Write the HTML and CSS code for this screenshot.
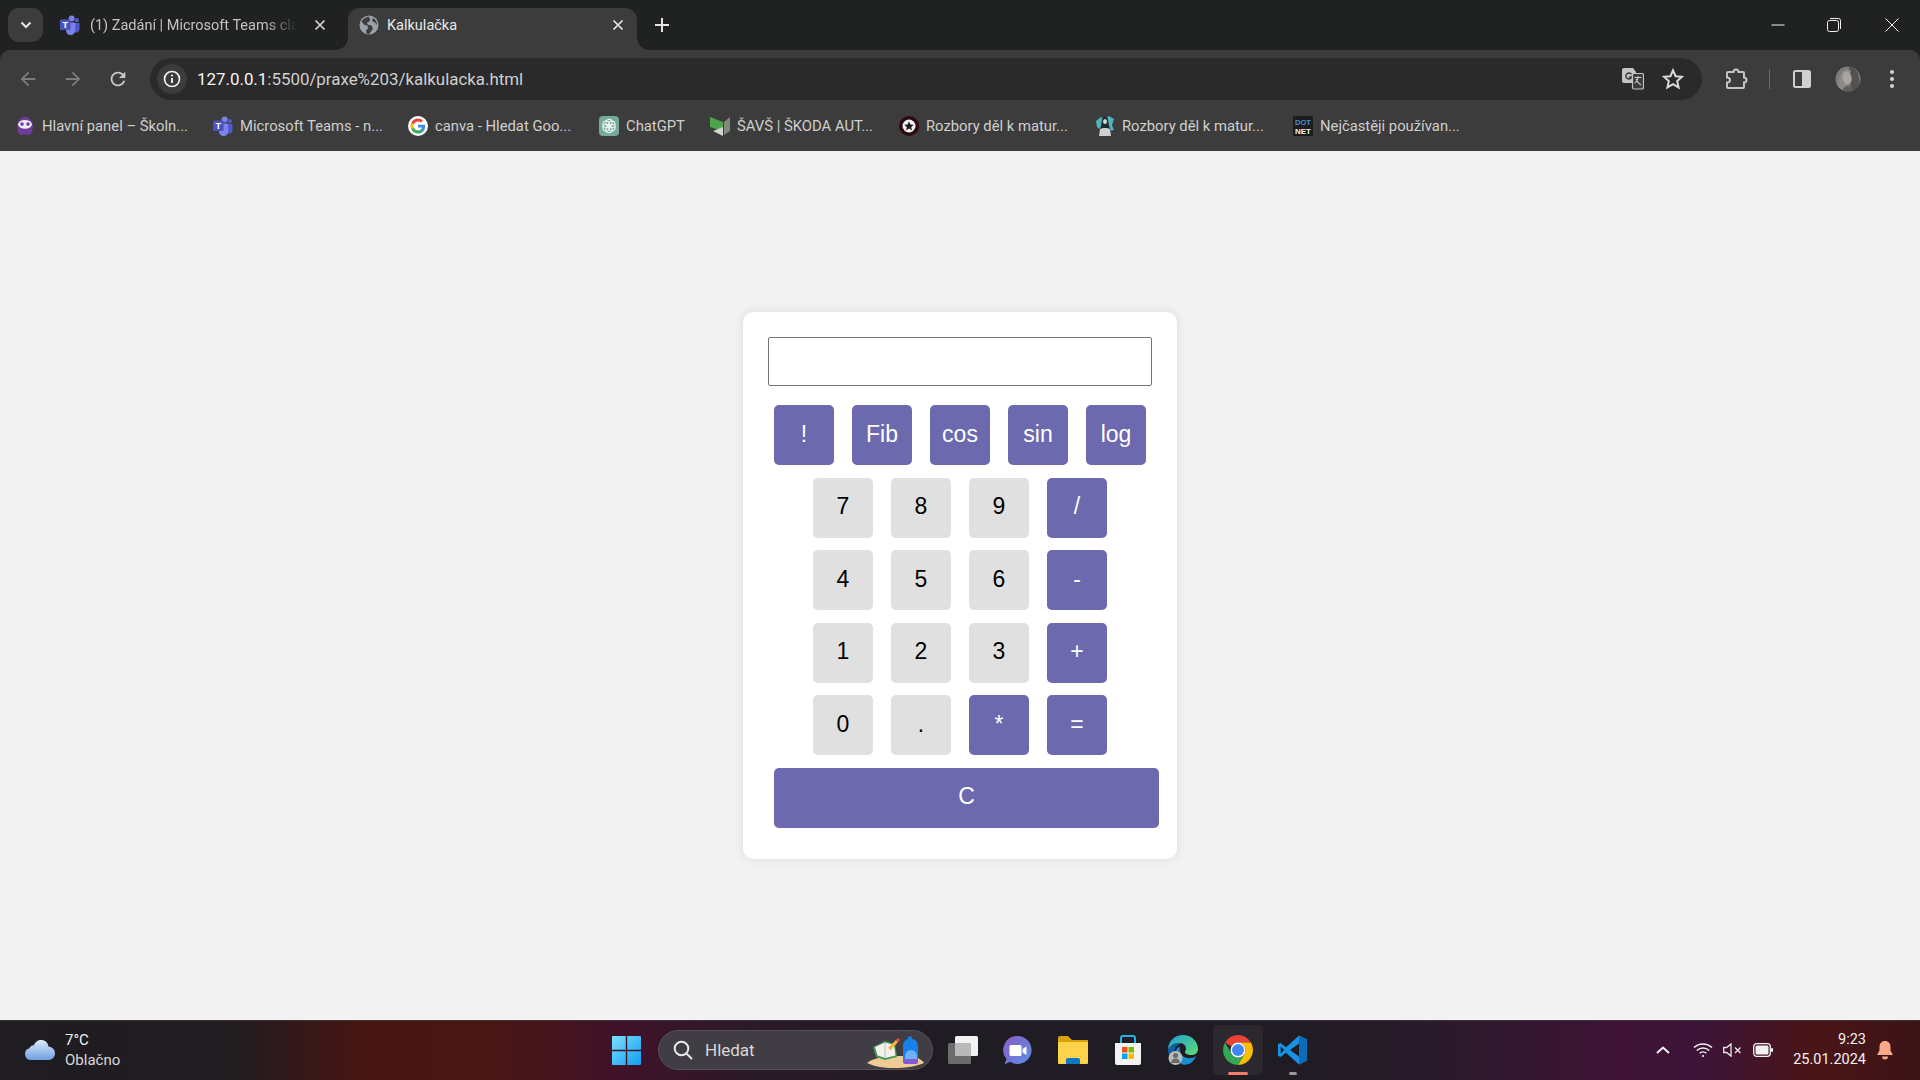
FILE: index.html
```html
<!DOCTYPE html>
<html lang="cs">
<head>
<meta charset="utf-8">
<title>Kalkulačka</title>
<link rel="stylesheet" href="styles.css">
</head>
<body>
<svg class="defs" width="0" height="0" aria-hidden="true">
  <symbol id="teams" viewBox="0 0 20 20">
    <circle cx="11.6" cy="3.6" r="3" fill="#7b83eb"/>
    <circle cx="16.8" cy="5.2" r="2.1" fill="#5059c9"/>
    <path d="M13.5 8h6v6.2a3.2 3.2 0 0 1-4.5 3z" fill="#5059c9"/>
    <path d="M6 7.5h9.2v8a4.6 4.6 0 0 1-9.2 0z" fill="#7b83eb"/>
    <rect x="0" y="4.6" width="10.5" height="10.5" rx="1.2" fill="#4b53bc"/>
    <text x="5.25" y="12.9" class="svg-t">T</text>
  </symbol>
  <symbol id="back" viewBox="0 0 24 24"><path d="M20 11H7.83l5.59-5.59L12 4l-8 8 8 8 1.41-1.41L7.83 13H20v-2z"/></symbol>
  <symbol id="forward" viewBox="0 0 24 24"><path d="M12 4l-1.41 1.41L16.17 11H4v2h12.17l-5.58 5.59L12 20l8-8z"/></symbol>
</svg>

<header class="chrome">
  <div class="tabstrip">
    <button class="tab-list" type="button">
      <svg width="12" height="8" viewBox="0 0 12 8"><path d="M1.5 1.5 6 6l4.5-4.5" fill="none" stroke="#e6e6e6" stroke-width="2"/></svg>
    </button>
    <div class="tab tab-bg">
      <svg class="fav" width="20" height="20"><use href="#teams"/></svg>
      <span class="tab-title tab-title-fade">(1) Zadání | Microsoft Teams cla</span>
      <svg class="tab-close" width="12" height="12" viewBox="0 0 12 12"><path d="M1.5 1.5l9 9m0-9l-9 9" stroke="#d6d6d6" stroke-width="1.7"/></svg>
    </div>
    <div class="tab tab-active">
      <svg class="fav" width="20" height="20" viewBox="0 0 20 20">
        <circle cx="10" cy="10" r="9.5" fill="#9aa0a6"/>
        <path d="M9.5 1.5C6 2.5 3.5 4.5 2.5 6.5l3 3.5 3 .5.5 3-2 2 .5 3c1 .3 2 .5 3 .3l3.500-5.300-1.500-3-4-1-.5-2 2.500-1 .5-2.500z M14 3l-1 3 3 1.500 2 2.500c0-3-1.500-5.500-4-7z" fill="#3c3c3c"/>
      </svg>
      <span class="tab-title tab-title-on">Kalkulačka</span>
      <svg class="tab-close" width="12" height="12" viewBox="0 0 12 12"><path d="M1.5 1.5l9 9m0-9l-9 9" stroke="#e6e6e6" stroke-width="1.700"/></svg>
    </div>
    <svg class="newtab" width="14" height="14" viewBox="0 0 14 14"><path d="M7 0v14M0 7h14" stroke="#e6e6e6" stroke-width="2"/></svg>
    <div class="winctl">
      <svg width="14" height="14" viewBox="0 0 14 14"><path d="M0.500 7h13" stroke="#f0f0f0" stroke-width="1"/></svg>
      <svg width="14" height="14" viewBox="0 0 14 14" fill="none" stroke="#f0f0f0"><rect x=".5" y="2.500" width="11" height="11" rx="2"/><path d="M3 .5h8.500a2 2 0 0 1 2 2V11"/></svg>
      <svg width="14" height="14" viewBox="0 0 14 14"><path d="M.5.500l13 13m0-13l-13 13" stroke="#f0f0f0" stroke-width="1"/></svg>
    </div>
  </div>

  <div class="toolbar">
    <div class="navrow">
      <div class="nav-btn"><svg class="ic-dim" width="22" height="22"><use href="#back"/></svg></div>
      <div class="nav-btn"><svg class="ic-dim" width="22" height="22"><use href="#forward"/></svg></div>
      <div class="nav-btn"><svg class="ic-light" width="22" height="22" viewBox="0 0 24 24"><path d="M17.650 6.350C16.200 4.900 14.210 4 12 4c-4.420 0-7.990 3.580-7.990 8s3.570 8 7.990 8c3.730 0 6.840-2.550 7.730-6h-2.080c-.82 2.330-3.040 4-5.650 4-3.310 0-6-2.690-6-6s2.690-6 6-6c1.660 0 3.140.69 4.220 1.780L13 11h7V4l-2.350 2.350z"/></svg></div>

      <div class="omnibox">
        <div class="site-info">
          <svg width="18" height="18" viewBox="0 0 18 18"><circle cx="9" cy="9" r="7.500" fill="none" stroke="#eee" stroke-width="1.700"/><path d="M9 8v5" stroke="#eee" stroke-width="1.900"/><circle cx="9" cy="5.500" r="1.100" fill="#eee"/></svg>
        </div>
        <span class="url"><span class="url-host">127.0.0.1</span>:5500/praxe%203/kalkulacka.html</span>
        <div class="omni-actions">
          <svg width="22" height="22" viewBox="0 0 22 22">
            <path d="M2 0h9l3 4v11H2a2 2 0 0 1-2-2V2a2 2 0 0 1 2-2z" fill="#c4c4c4"/>
            <path d="M9.500 6.500a3 3 0 1 0 .2 2.500H7" fill="none" stroke="#3c3c3c" stroke-width="1.500"/>
            <rect x="10.500" y="5.500" width="11" height="15.500" rx="1.500" fill="#3c3c3c" stroke="#c4c4c4" stroke-width="1.200"/>
            <path d="M12.500 9.500h7M16 8v1.500c-.3 3-1.500 4.500-3.500 5.500M14 11c1 2.500 2.500 4.500 5 6" fill="none" stroke="#c4c4c4" stroke-width="1.100"/>
          </svg>
          <svg width="22" height="22" viewBox="0 0 22 22"><path d="M11 2.300l2.600 5.900 6.400.6-4.800 4.300 1.400 6.300L11 16.100l-5.600 3.300 1.400-6.300L2 8.800l6.400-.6z" fill="none" stroke="#dcdcdc" stroke-width="2" stroke-linejoin="miter"/></svg>
        </div>
      </div>

      <div class="tool-right">
        <div class="tool-cell"><svg width="22" height="22" viewBox="0 0 22 22"><path d="M2 4H7.500a2.500 2.500 0 0 1 5 0H17a1 1 0 0 1 1 1v4.500a2.500 2.500 0 0 1 0 5V19a1 1 0 0 1-1 1H2a1 1 0 0 1-1-1v-4.500c2.500 0 3-1.500 3-2.500s-.5-2.500-3-2.500V5a1 1 0 0 1 1-1z" fill="none" stroke="#c4c4c4" stroke-width="2"/></svg></div>
        <div class="tool-cell"><span class="tool-sep"></span></div>
        <div class="tool-cell"><svg width="18" height="18" viewBox="0 0 18 18"><rect x="1" y="1" width="16" height="16" rx="1.500" fill="none" stroke="#d0d0d0" stroke-width="2"/><rect x="9" y="1" width="8" height="16" fill="#d0d0d0"/></svg></div>
        <div class="tool-cell">
          <svg width="26" height="26" viewBox="0 0 26 26">
            <defs><clipPath id="av"><circle cx="13" cy="13" r="12.500"/></clipPath></defs>
            <g clip-path="url(#av)">
              <rect width="26" height="26" fill="#7e7c7a"/>
              <path d="M14 0c6 1 10 6 10 13l2 13H16z" fill="#55514f"/>
              <path d="M3 26c0-9 1-17 5-21 3-2 6-2 8 0l-6 21z" fill="#8c8a88"/>
              <ellipse cx="12" cy="12" rx="4.500" ry="6.500" transform="rotate(-12 12 12)" fill="#a8a6a4"/>
              <path d="M7 26c1-4 3-6 6-6s5 2 6 6z" fill="#5f5c5a"/>
            </g>
          </svg>
        </div>
        <div class="tool-cell"><svg width="6" height="20" viewBox="0 0 6 20"><circle cx="3" cy="3" r="2.100" fill="#d0d0d0"/><circle cx="3" cy="10" r="2.100" fill="#d0d0d0"/><circle cx="3" cy="17" r="2.100" fill="#d0d0d0"/></svg></div>
      </div>
    </div>

    <nav class="bookmarks">
      <a class="bm">
        <svg width="20" height="20" viewBox="2.500 1 15 18">
          <path d="M3 9a7 7 0 0 1 14 0c0 4-.5 7-2 8.500-1 1-2 .5-3 0H8c-1 .5-2 1-3 0C3.500 16 3 13 3 9z" fill="#6f3c9e"/>
          <ellipse cx="10" cy="8.500" rx="6.200" ry="4" fill="#f0ecf4"/>
          <circle cx="7.300" cy="8.300" r="1.600" fill="#6f3c9e"/><circle cx="12.700" cy="8.300" r="1.600" fill="#6f3c9e"/>
        </svg>
        <span>Hlavní panel – Školn...</span>
      </a>
      <a class="bm"><svg width="20" height="20"><use href="#teams"/></svg><span>Microsoft Teams - n...</span></a>
      <a class="bm">
        <svg width="20" height="20" viewBox="-8 -8 64 64">
          <circle cx="24" cy="24" r="32" fill="#fff"/>
          <path fill="#EA4335" d="M24 9.500c3.540 0 6.710 1.220 9.210 3.600l6.850-6.850C35.900 2.380 30.470 0 24 0 14.620 0 6.510 5.380 2.560 13.220l7.980 6.190C12.430 13.720 17.740 9.500 24 9.500z"/>
          <path fill="#4285F4" d="M46.980 24.550c0-1.570-.15-3.090-.38-4.550H24v9.020h12.940c-.58 2.960-2.260 5.480-4.780 7.180l7.730 6c4.510-4.180 7.090-10.360 7.090-17.650z"/>
          <path fill="#FBBC05" d="M10.530 28.590c-.48-1.450-.76-2.990-.76-4.590s.27-3.140.76-4.590l-7.980-6.190C.92 16.460 0 20.120 0 24c0 3.880.92 7.540 2.560 10.780l7.970-6.190z"/>
          <path fill="#34A853" d="M24 48c6.480 0 11.930-2.130 15.890-5.810l-7.730-6c-2.150 1.450-4.920 2.300-8.160 2.300-6.260 0-11.570-4.220-13.470-9.910l-7.980 6.190C6.510 42.620 14.620 48 24 48z"/>
        </svg>
        <span>canva - Hledat Goo...</span>
      </a>
      <a class="bm">
        <svg width="20" height="20" viewBox="0 0 20 20">
          <rect width="20" height="20" rx="4" fill="#74aa9c"/>
          <g fill="none" stroke="#eef5f3" stroke-width="1.100">
            <ellipse cx="10" cy="6.800" rx="3.200" ry="3.400"/><ellipse cx="10" cy="13.200" rx="3.200" ry="3.400"/>
            <ellipse cx="7.100" cy="8.400" rx="3.200" ry="3.400"/><ellipse cx="12.900" cy="8.400" rx="3.200" ry="3.400"/>
            <ellipse cx="7.100" cy="11.600" rx="3.200" ry="3.400"/><ellipse cx="12.900" cy="11.600" rx="3.200" ry="3.400"/>
          </g>
        </svg>
        <span>ChatGPT</span>
      </a>
      <a class="bm">
        <svg width="20" height="20" viewBox="0 0 20 20">
          <path d="M0 1l13 5v9L0 11z" fill="#4fa34a"/>
          <path d="M14 6l6-5v14l-6 4z" fill="#7f8a7f"/>
          <path d="M3 15l10-4v9z" fill="#d4d4d4"/>
        </svg>
        <span>ŠAVŠ | ŠKODA AUT...</span>
      </a>
      <a class="bm">
        <svg width="20" height="20" viewBox="0 0 20 20">
          <circle cx="10" cy="10" r="10" fill="#2b0a10"/>
          <circle cx="10" cy="10" r="6.500" fill="#f4f4f4"/>
          <path d="M10 5.200l1.400 3.200 3.400.3-2.600 2.300.8 3.400-3-1.800-3 1.800.8-3.400-2.600-2.300 3.400-.3z" fill="#1c1c1c"/>
        </svg>
        <span>Rozbory děl k matur...</span>
      </a>
      <a class="bm">
        <svg width="20" height="20" viewBox="0 0 20 20">
          <path d="M1 5l5-4 4 2 4-3 5 3-2 6 2 5-5 1-8-1-4-3z" fill="#4fb3bd"/>
          <path d="M7 4a3 3 0 0 1 6 0l1 6 2 5H4l2-5z" fill="#23282a"/>
          <ellipse cx="10" cy="5.500" rx="2" ry="2.600" fill="#d8d8d8"/>
          <path d="M4 20l1-7c2-1.500 8-1.500 10 0l1 7z" fill="#cfcfcf"/>
        </svg>
        <span>Rozbory děl k matur...</span>
      </a>
      <a class="bm">
        <svg width="20" height="20" viewBox="0 0 20 20">
          <rect width="20" height="20" fill="#1c1c1c"/>
          <text x="10" y="8.500" class="svg-dot">DOT</text>
          <text x="10" y="18" class="svg-net">NET</text>
        </svg>
        <span>Nejčastěji používan...</span>
      </a>
    </nav>
  </div>
</header>

<main class="page">
  <section class="calc">
    <input class="display" type="text" aria-label="Displej">
    <div class="keys">
      <div class="key-row">
        <button class="key key-op" type="button">!</button>
        <button class="key key-op" type="button">Fib</button>
        <button class="key key-op" type="button">cos</button>
        <button class="key key-op" type="button">sin</button>
        <button class="key key-op" type="button">log</button>
      </div>
      <div class="key-row">
        <button class="key" type="button">7</button>
        <button class="key" type="button">8</button>
        <button class="key" type="button">9</button>
        <button class="key key-op" type="button">/</button>
      </div>
      <div class="key-row">
        <button class="key" type="button">4</button>
        <button class="key" type="button">5</button>
        <button class="key" type="button">6</button>
        <button class="key key-op" type="button">-</button>
      </div>
      <div class="key-row">
        <button class="key" type="button">1</button>
        <button class="key" type="button">2</button>
        <button class="key" type="button">3</button>
        <button class="key key-op" type="button">+</button>
      </div>
      <div class="key-row">
        <button class="key" type="button">0</button>
        <button class="key" type="button">.</button>
        <button class="key key-op" type="button">*</button>
        <button class="key key-op" type="button">=</button>
      </div>
      <div class="key-row key-row-clear">
        <button class="key key-op key-clear" type="button">C</button>
      </div>
    </div>
  </section>
</main>

<footer class="taskbar">
  <div class="weather">
    <svg width="30" height="20" viewBox="0 0 30 20">
      <defs><linearGradient id="cl" x1="0" y1="0" x2="0" y2="1"><stop offset="0" stop-color="#dbe9fb"/><stop offset="1" stop-color="#6f9fe0"/></linearGradient></defs>
      <path d="M6 20a6 6 0 0 1-1.500-11.800C5 6.500 7 5 9 5.300 10 2 13 0 16 0c4 0 7 2.500 7.500 6.500 3.500.5 6.500 3 6.500 6.800 0 4-3 6.700-6.500 6.700z" fill="url(#cl)"/>
    </svg>
    <div class="weather-text">
      <div class="weather-temp">7°C</div>
      <div class="weather-desc">Oblačno</div>
    </div>
  </div>

  <div class="task-center">
    <svg class="start" width="29" height="29" viewBox="0 0 29 29">
      <defs><linearGradient id="wn" x1="0" y1="0" x2="1" y2="1"><stop offset="0" stop-color="#7be0ff"/><stop offset="1" stop-color="#0f9df0"/></linearGradient></defs>
      <path d="M1 0h12.800v13.800H0V1a1 1 0 0 1 1-1zM15.200 0H28a1 1 0 0 1 1 1v12.800H15.200zM0 15.200h13.800V29H1a1 1 0 0 1-1-1zM15.200 15.200H29V28a1 1 0 0 1-1 1H15.200z" fill="url(#wn)"/>
    </svg>
    <div class="search">
      <svg width="20" height="20" viewBox="0 0 20 20" fill="none" stroke="#e8e8e8" stroke-width="2"><circle cx="8.500" cy="8.500" r="6.800"/><path d="M13.500 13.500l5.500 5.500"/></svg>
      <span class="search-text">Hledat</span>
      <svg class="search-art" width="57" height="34" viewBox="0 0 57 34">
        <path d="M0 28c6-4 12-6 24-7h20c5 .5 10 3 13 7-6 3-18 5-30 5S6 31 0 28z" fill="#efca94"/>
        <path d="M6 12l12-6 10 3 2 13-12 3-9-3z" fill="#3f9a5a"/>
        <path d="M8 12l10-4.500 9 2.500 1.500 10.500-10 2.500-8-2.500z" fill="#f2f2ea"/>
        <path d="M18 8v15" stroke="#b8c4b0"/>
        <path d="M21 13l8-8 2 2-7 8z" fill="#f4b63c"/><path d="M29 5l2-2 2 2-2 2z" fill="#e5533d"/>
        <path d="M36 26V11c0-4 3-7 5-7V1.500h4V4c3 0 6 3 6 7v15a2 2 0 0 1-2 2H38a2 2 0 0 1-2-2z" fill="#1780ea"/>
        <path d="M38 27v-6a6 6 0 0 1 12 0v6z" fill="#6fb0f5"/>
        <path d="M36 24h15v3a2 2 0 0 1-2 2H38a2 2 0 0 1-2-2z" fill="#7d5bd8"/>
      </svg>
    </div>
    <div class="task-icons">
      <div class="task-icon">
        <svg width="30" height="28" viewBox="0 0 30 28">
          <rect x="0" y="7" width="23" height="21" rx="1.500" fill="#6c6c6c"/>
          <rect x="7" y="0" width="23" height="20" rx="1.500" fill="#f2f2f2"/>
          <rect x="7" y="7" width="16" height="13" fill="#b9b9b9"/>
        </svg>
      </div>
      <div class="task-icon">
        <svg width="29" height="29" viewBox="0 0 29 29">
          <defs><linearGradient id="mt" x1="0" y1="0" x2="1" y2="1"><stop offset="0" stop-color="#8a5cc8"/><stop offset="1" stop-color="#5c8fe6"/></linearGradient></defs>
          <path d="M14.500 0a14 14 0 1 1-7.500 25.800L1.500 28.500 3.500 23A14 14 0 0 1 14.500 0z" fill="url(#mt)"/>
          <rect x="6.500" y="9" width="12" height="11" rx="1.500" fill="#fff"/>
          <path d="M19.500 13l4-2.500v8.500l-4-2.500z" fill="#fff"/>
        </svg>
      </div>
      <div class="task-icon">
        <svg width="30" height="28" viewBox="0 0 30 28">
          <path d="M0 2a2 2 0 0 1 2-2h8l4 4h16v6H0z" fill="#d9a106"/>
          <path d="M0 6h30v21a1 1 0 0 1-1 1H1a1 1 0 0 1-1-1z" fill="#fdd34c"/>
          <path d="M8 24a2 2 0 0 1 2-2h10a2 2 0 0 1 2 2v4H8z" fill="#0f78c4"/>
        </svg>
      </div>
      <div class="task-icon">
        <svg width="30" height="30" viewBox="0 0 30 30">
          <path d="M2 8h26v20a2 2 0 0 1-2 2H4a2 2 0 0 1-2-2z" fill="#f3f3f3"/>
          <path d="M8 8V3a2 2 0 0 1 2-2h10a2 2 0 0 1 2 2v5" fill="none" stroke="#22b4e8" stroke-width="2"/>
          <rect x="9" y="12" width="5.500" height="5.500" fill="#f25022"/><rect x="15.500" y="12" width="5.500" height="5.500" fill="#7fba00"/>
          <rect x="9" y="18.500" width="5.500" height="5.500" fill="#00a4ef"/><rect x="15.500" y="18.500" width="5.500" height="5.500" fill="#ffb900"/>
        </svg>
      </div>
      <div class="task-icon">
        <svg width="30" height="30" viewBox="0 0 30 30">
          <defs><linearGradient id="ed" x1="0" y1="0" x2="1" y2="1"><stop offset="0" stop-color="#1f9fd8"/><stop offset="1" stop-color="#5fdc70"/></linearGradient></defs>
          <path d="M15 0c8 0 15 6 15 14 0 4-3 6-7 6-3 0-6-1-6-3 0-1 1-1.500 1-3.500C18 10 15 8 11 8 6 8 2 11 0 15 0 6 7 0 15 0z" fill="url(#ed)"/>
          <path d="M0 15c2-4 6-7 11-7 1 0 2 .2 3 .5C9 9 6 13 6 18c0 6 4 10 10 11.500C7 30 0 24 0 15z" fill="#0c5fa8"/>
          <path d="M16 29.800c-5-1.500-9-5.500-9-11 0-3 2-6 5-7-1 4 1 9 5 10.500 4 1.500 8 1 11-1-2 5-6 9-12 8.500z" fill="#1a8ed0"/>
          <circle cx="7.500" cy="23" r="7" fill="#bcbcbc"/><circle cx="7.500" cy="20.500" r="2.500" fill="#6a6a6a"/><path d="M3 28c0-3 2-4.500 4.500-4.500S12 25 12 28z" fill="#6a6a6a"/>
        </svg>
      </div>
      <div class="task-icon">
        <div class="task-tile task-tile-on">
          <svg width="30" height="30" viewBox="4 4 40 40">
            <path d="M6.680 14A20 20 0 0 1 41.320 14H24A10 10 0 0 0 15.340 19z" fill="#ea4335"/>
            <path d="M41.320 14A20 20 0 0 1 24 44L32.660 29A10 10 0 0 0 24 14z" fill="#fbbc04"/>
            <path d="M24 44A20 20 0 0 1 6.680 14L15.340 29A10 10 0 0 0 32.660 29z" fill="#34a853"/>
            <circle cx="24" cy="24" r="10" fill="#fff"/><circle cx="24" cy="24" r="8" fill="#4285f4"/>
          </svg>
          <span class="task-ind task-ind-on"></span>
        </div>
      </div>
      <div class="task-icon">
        <svg width="31" height="30" viewBox="0 0 31 30">
          <path fill-rule="evenodd" d="M22 .5L30 4.500v21L22 29.500 9 17.800 3.500 22 1 20.700V9.300L3.500 8 9 12.200zM22 8.500L13 15l9 6.500zM3.700 11.500v7L7.200 15z" fill="#1793e6"/>
          <path d="M22 .5L30 4.500v21L22 29.500V21.500 8.500z" fill="#0d6cb8"/>
        </svg>
        <span class="task-ind"></span>
      </div>
    </div>
  </div>

  <div class="tray">
    <svg class="tray-chev" width="14" height="8" viewBox="0 0 14 8"><path d="M1 7l6-5.500L13 7" fill="none" stroke="#f2f2f2" stroke-width="2"/></svg>
    <svg class="tray-wifi" width="20" height="16" viewBox="0 0 20 16" fill="none" stroke="#f2f2f2" stroke-width="1.500"><path d="M1 5.500a13 13 0 0 1 18 0M3.800 8.500a9 9 0 0 1 12.400 0M6.700 11.300a4.800 4.800 0 0 1 6.600 0"/><circle cx="10" cy="14" r="1.100" fill="#f2f2f2" stroke="none"/></svg>
    <svg class="tray-vol" width="19" height="14" viewBox="0 0 19 14" fill="none" stroke="#e8e8e8" stroke-width="1.300"><path d="M.7 4.500h3L8 .9v12.200L3.700 9.500h-3z"/><path d="M12 4.500l5.500 5.500m0-5.500L12 10"/></svg>
    <svg class="tray-bat" width="20" height="14" viewBox="0 0 20 14"><rect x=".7" y=".7" width="16.600" height="12.600" rx="3" fill="none" stroke="#f2f2f2" stroke-width="1.300"/><rect x="2.500" y="2.500" width="13" height="9" rx="1.500" fill="#f2f2f2"/><rect x="18" y="5" width="2" height="4" rx="1" fill="#f2f2f2"/></svg>
    <div class="clock"><div>9:23</div><div>25.01.2024</div></div>
    <svg class="tray-bell" width="16" height="19" viewBox="0 0 16 19"><path d="M8 0c3.500 0 5.500 2.500 5.500 6v3.500L16 14H0l2.500-4.500V6C2.500 2.500 4.500 0 8 0z" fill="#f9a98a"/><path d="M5 15.500h6a3 3 0 0 1-6 0z" fill="#f9a98a"/></svg>
  </div>
</footer>
</body>
</html>
```

FILE: styles.css
```css
* { box-sizing: border-box; }

html, body { height: 100%; }

body {
  margin: 0;
  display: flex;
  flex-direction: column;
  overflow: hidden;
  background: #f2f2f2;
  font-family: Roboto, "Noto Sans", sans-serif;
}

.defs { position: absolute; }

.svg-t { font: 700 9px "Liberation Sans", sans-serif; fill: #fff; text-anchor: middle; }
.svg-dot { font: 700 7.500px "Liberation Sans", sans-serif; fill: #4d8fd6; text-anchor: middle; }
.svg-net { font: 700 8px "Liberation Sans", sans-serif; fill: #f0f0f0; text-anchor: middle; }

/* browser chrome */
.chrome { flex: none; background: #202222; }

.tabstrip {
  height: 50px;
  display: flex;
  align-items: flex-end;
  padding-left: 8px;
}

.tab-list {
  flex: none;
  align-self: flex-start;
  margin-top: 8px;
  width: 35px;
  height: 34px;
  padding: 0;
  border: 0;
  border-radius: 11px;
  background: #3c3c3c;
  display: flex;
  align-items: center;
  justify-content: center;
}

.tab {
  flex: none;
  width: 300px;
  height: 42px;
  margin-left: 5px;
  padding: 0 13px 8px 12px;
  display: flex;
  align-items: center;
  color: #c3c3c3;
  position: relative;
  font-size: 14.500px;
}

.tab-bg { padding-right: 22px; }

.tab-active {
  width: 289px;
  margin-left: 0;
  padding-left: 11px;
  background: #3c3c3c;
  border-radius: 12px 12px 0 0;
}

.tab-active::before,
.tab-active::after {
  content: "";
  position: absolute;
  bottom: 0;
  width: 12px;
  height: 12px;
}

.tab-active::before {
  left: -12px;
  background: radial-gradient(circle at 0 0, transparent 11.500px, #3c3c3c 12px);
}

.tab-active::after {
  right: -12px;
  background: radial-gradient(circle at 100% 0, transparent 11.500px, #3c3c3c 12px);
}

.fav { flex: none; }

.tab-title {
  flex: 1;
  min-width: 0;
  margin-left: 10px;
  white-space: nowrap;
}

.tab-title-on { margin-left: 8px; color: #e8e8e8; }

.tab-title-fade {
  margin-right: 10px;
  -webkit-mask-image: linear-gradient(90deg, #000 82%, transparent 97%);
  mask-image: linear-gradient(90deg, #000 82%, transparent 97%);
}

.tab-close { flex: none; }

.newtab { flex: none; margin: 0 0 18px 18px; }

.winctl {
  margin-left: auto;
  align-self: flex-start;
  padding: 18px 21px 0 0;
  display: flex;
  gap: 44px;
}

.winctl svg:first-child { margin-right: -2px; }

.toolbar {
  height: 101px;
  padding-top: 8px;
  background: #3c3c3c;
  border-radius: 10px 10px 0 0;
  display: flex;
  flex-direction: column;
}

.navrow {
  height: 42px;
  flex: none;
  display: flex;
  align-items: center;
  padding-left: 5px;
}

.nav-btn {
  flex: none;
  width: 45px;
  display: flex;
  justify-content: center;
}

.ic-dim { fill: #7c7c7c; }
.ic-light { fill: #c9c9c9; }

.omnibox {
  flex: 1;
  min-width: 0;
  height: 42px;
  margin-left: 10px;
  padding: 0 18px 0 7px;
  background: #2a2a2a;
  border-radius: 21px;
  display: flex;
  align-items: center;
}

.site-info {
  flex: none;
  width: 30px;
  height: 30px;
  border-radius: 50%;
  background: #3c3c3c;
  display: flex;
  align-items: center;
  justify-content: center;
}

.url {
  margin-left: 10px;
  font-size: 16.900px;
  color: #cfcfcf;
  white-space: nowrap;
}

.url-host { color: #f4f4f4; }

.omni-actions {
  margin-left: auto;
  display: flex;
  align-items: center;
  gap: 18px;
}

.tool-right {
  flex: none;
  margin-left: 12px;
  padding-right: 6px;
  display: grid;
  grid-template-columns: 45px 20px 46px 45px 44px;
  align-items: center;
}

.tool-cell { display: flex; justify-content: center; align-items: center; }

.tool-sep { width: 1px; height: 20px; background: #6a6a6a; }

.bookmarks {
  flex: 1;
  padding-left: 15px;
  display: grid;
  grid-template-columns: 198px 195px 191px 111px 189px 196px 198px 1fr;
  align-items: center;
  font-size: 14.800px;
  color: #cfcfcf;
}

.bm {
  display: flex;
  align-items: center;
  gap: 7px;
  white-space: nowrap;
}

/* page */
.page {
  flex: 1;
  min-height: 0;
  display: flex;
  align-items: center;
  justify-content: center;
  background: #f2f2f2;
}

.calc {
  width: 434px;
  padding: 25px 25px 31px;
  background: #fff;
  border-radius: 10px;
  box-shadow: 0 0 10px rgba(0, 0, 0, .1);
  font-family: "Liberation Sans", Arial, sans-serif;
}

.display {
  display: block;
  width: 100%;
  height: 49px;
  padding: 0 5px;
  border: 1px solid #767676;
  border-radius: 2px;
  background: #fff;
  font: 22px "Liberation Sans", Arial, sans-serif;
}

.keys {
  margin-top: 19px;
  display: flex;
  flex-direction: column;
  gap: 12.500px;
}

.key-row {
  display: flex;
  justify-content: center;
  gap: 18px;
}

.key-row-clear { justify-content: flex-start; padding-left: 6px; }

.key {
  flex: none;
  width: 60px;
  height: 60px;
  padding: 0 0 2px;
  border: 0;
  border-radius: 5px;
  background: #e0e0e0;
  color: #000;
  font: 23px "Liberation Sans", Arial, sans-serif;
}

.key-op { background: #6d69ae; color: #fff; }

.key-clear { width: 385px; }

/* taskbar */
.taskbar {
  flex: none;
  height: 60px;
  box-shadow: inset 0 1px 0 #3a3438;
  color: #f2f2f2;
  font-size: 15px;
  display: grid;
  grid-template-columns: 612px auto 1fr;
  align-items: center;
  background: linear-gradient(90deg, #1f1c22 0, #201c20 230px, #4a1512 370px, #4a1714 490px, #401229 620px, #2a1a27 760px, #1f1c23 950px, #1f1c23 1270px, #2c1a2c 1450px, #3f1336 1620px, #3c1438 1700px, #4a1518 1810px, #3c1416 1920px);
}

.weather {
  display: flex;
  align-items: center;
  gap: 10px;
  padding-left: 25px;
}

.weather-text { line-height: 20px; }
.weather-desc { color: #d8d8d8; }

.task-center { display: flex; align-items: center; }

.start { flex: none; }

.search {
  flex: none;
  width: 275px;
  height: 40px;
  margin-left: 17px;
  padding: 0 8px 0 14px;
  border-radius: 20px;
  background: #413d45;
  border: 1px solid #56525a;
  display: flex;
  align-items: center;
}

.search-text { margin-left: 12px; font-size: 17px; color: #d8d8d8; }

.search-art { margin-left: auto; align-self: flex-end; }

.task-icons { display: flex; margin-left: 2px; }

.task-icon {
  position: relative;
  width: 55px;
  height: 50px;
  display: flex;
  align-items: center;
  justify-content: center;
}

.task-tile {
  position: relative;
  width: 50px;
  height: 50px;
  display: flex;
  align-items: center;
  justify-content: center;
}

.task-tile-on { background: #2b292f; border-radius: 5px; }

.task-ind {
  position: absolute;
  left: 50%;
  bottom: 0;
  width: 8px;
  height: 3px;
  margin-left: -4px;
  border-radius: 2px;
  background: #9a9a9a;
}

.task-ind-on { width: 20px; margin-left: -10px; background: #f47e6a; }

.tray {
  display: flex;
  align-items: center;
  justify-content: flex-end;
  padding-right: 27px;
}

.tray-wifi { margin-left: 23px; }
.tray-vol { margin-left: 10px; }
.tray-bat { margin-left: 11px; }

.clock {
  margin-left: 20px;
  text-align: right;
  line-height: 20px;
  font-size: 14.500px;
}

.tray-bell { margin-left: 11px; }
```
